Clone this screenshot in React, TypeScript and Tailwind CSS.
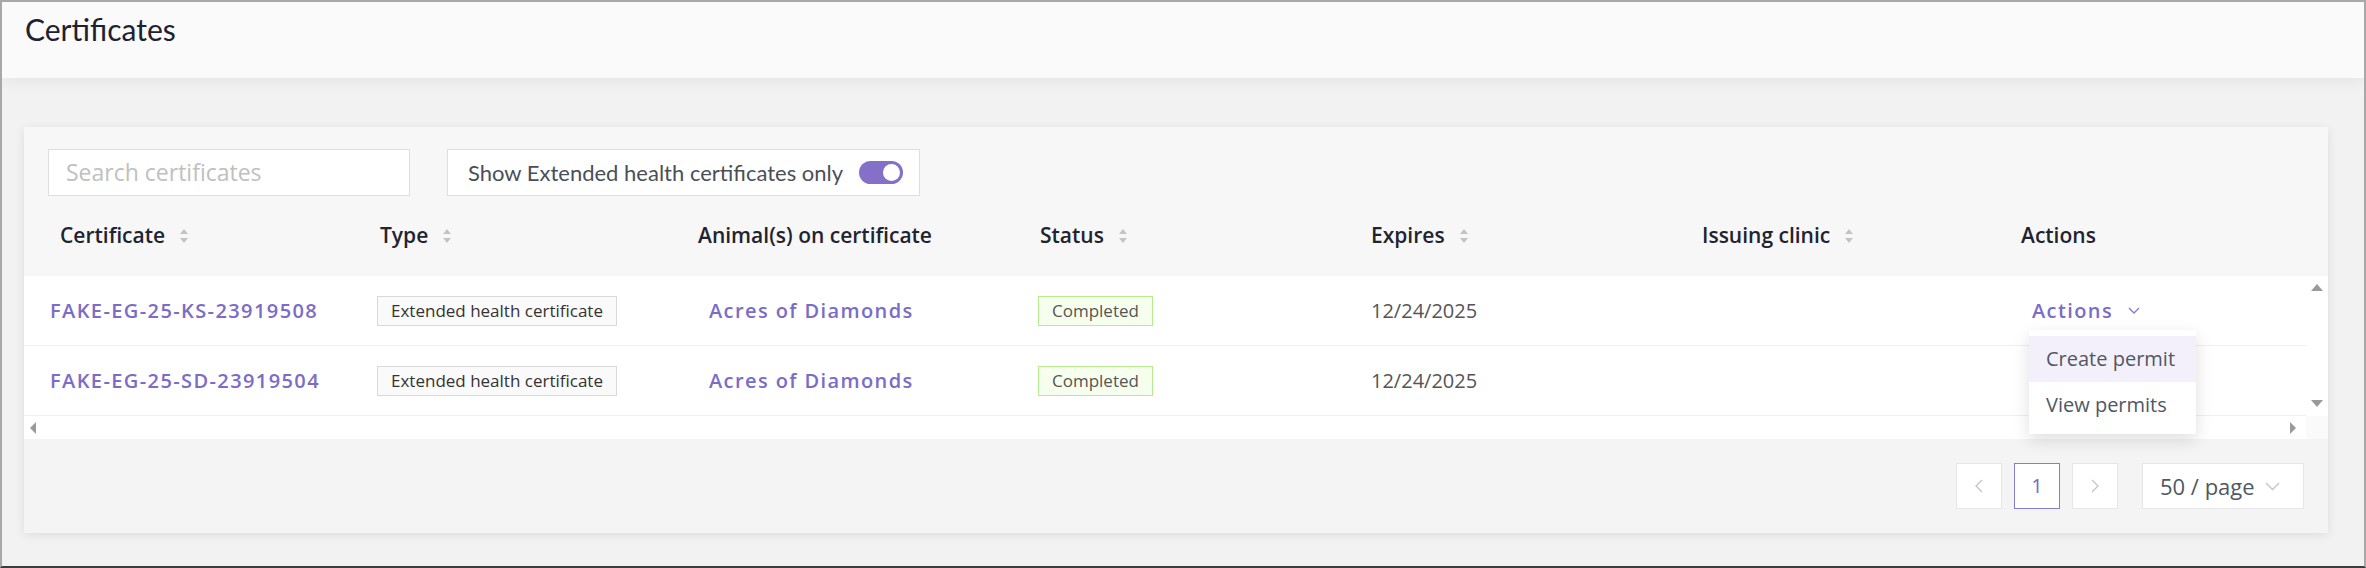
import React from "react";

const SortIcon = () => (
  <svg width="10" height="16" viewBox="0 0 10 16" className="shrink-0">
    <path d="M5 1 L9 6 L1 6 Z" fill="#c4c4c4" />
    <path d="M1 10 L9 10 L5 15 Z" fill="#c4c4c4" />
  </svg>
);

const cols = "grid grid-cols-[320px_318px_342px_331px_331px_319px_1fr]";

const linkCls = "text-[20px] font-semibold tracking-[1.4px] text-[#7b6cc7]";

function Row({ id, withActions }: { id: string; withActions: boolean }) {
  return (
    <div className={`${cols} h-[70px] items-center pl-[36px] border-b border-[#efefef] bg-white`}>
      <div className="-ml-[10px]">
        <span className={linkCls}>{id}</span>
      </div>
      <div className="-ml-[3px]">
        <span className="inline-flex h-[30px] items-center border border-[#d9d9d9] bg-[#fafafa] px-[13px] text-[17px] text-[#333]">
          Extended health certificate
        </span>
      </div>
      <div className="ml-[11px]">
        <span className={linkCls}>Acres of Diamonds</span>
      </div>
      <div className="-ml-[2px]">
        <span className="inline-flex h-[30px] items-center border border-[#b7eb8f] bg-[#f6ffed] px-[13px] text-[17px] text-[#555]">
          Completed
        </span>
      </div>
      <div className="text-[20px] text-[#555]">12/24/2025</div>
      <div />
      <div className="ml-[11px]">
        {withActions && (
          <span className="inline-flex items-center gap-[15px]">
            <span className={linkCls}>Actions</span>
            <svg width="12" height="7" viewBox="0 0 12 7">
              <path d="M1 1 L6 6 L11 1" fill="none" stroke="#8b7bd0" strokeWidth="1.4" />
            </svg>
          </span>
        )}
      </div>
    </div>
  );
}

export default function App() {
  return (
    <div className="w-[2366px] h-[568px] overflow-hidden border-2 border-[#a8a8a8] border-b-[#3d3d3d] bg-[#f2f2f2] font-['Open_Sans',sans-serif] flex flex-col">
      <header className="relative z-10 h-[76px] shrink-0 bg-[#fafafa] pl-[23px] pt-[9px] shadow-[0_4px_14px_rgba(0,0,0,0.06)]">
        <h1 className="font-['Lato',sans-serif] text-[30px] leading-[36px] text-[#1c2230]">Certificates</h1>
      </header>
      <main className="px-[22px] pt-[49px]">
        <div className="w-[2304px] bg-[#f7f7f7] shadow-[0_2px_10px_rgba(0,0,0,0.09)]">
          {/* toolbar */}
          <div className="flex gap-[37px] px-[24px] pt-[22px]">
            <div className="flex h-[47px] w-[362px] items-center border border-[#dedede] bg-white pl-[17px]">
              <span className="font-['Open_Sans',sans-serif] text-[23px] text-[#c0c0c0]">Search certificates</span>
            </div>
            <div className="flex h-[47px] w-[473px] items-center border border-[#dedede] bg-white pl-[20px]">
              <span className="font-['Lato',sans-serif] text-[22px] text-[#4a4f57]">Show Extended health certificates only</span>
              <span className="ml-[16px] flex h-[23px] w-[44px] items-center justify-end rounded-full bg-[#8470c8] pr-[3px]">
                <span className="h-[17px] w-[17px] rounded-full bg-white" />
              </span>
            </div>
          </div>
          {/* table header */}
          <div className={`${cols} h-[80px] items-center pl-[36px] text-[21px] font-semibold text-[#1f2430]`}>
            <div className="flex items-center gap-[14px]">Certificate<SortIcon /></div>
            <div className="flex items-center gap-[14px]">Type<SortIcon /></div>
            <div className="flex items-center gap-[14px]">Animal(s) on certificate</div>
            <div className="flex items-center gap-[14px]">Status<SortIcon /></div>
            <div className="flex items-center gap-[14px]">Expires<SortIcon /></div>
            <div className="flex items-center gap-[14px]">Issuing clinic<SortIcon /></div>
            <div className="flex items-center">Actions</div>
          </div>
          {/* body */}
          <div className="relative flex">
            <div className="w-[2282px]">
              <Row id="FAKE-EG-25-KS-23919508" withActions />
              <Row id="FAKE-EG-25-SD-23919504" withActions={false} />
              <div className="flex h-[23px] items-center justify-between bg-white pl-[5px] pr-[9px]">
                <svg width="8" height="12" viewBox="0 0 8 12">
                  <path d="M7 0 L1 6 L7 12 Z" fill="#9a9a9a" />
                </svg>
                <svg width="8" height="12" viewBox="0 0 8 12">
                  <path d="M1 0 L7 6 L1 12 Z" fill="#9a9a9a" />
                </svg>
              </div>
            </div>
            <div className="flex w-[22px] flex-col bg-white">
              <div className="flex h-[140px] flex-col items-center justify-between pb-[8px] pt-[7px]">
                <svg width="12" height="8" viewBox="0 0 12 8">
                  <path d="M0 8 L6 1 L12 8 Z" fill="#9a9a9a" />
                </svg>
                <svg width="12" height="8" viewBox="0 0 12 8">
                  <path d="M0 0 L6 7 L12 0 Z" fill="#9a9a9a" />
                </svg>
              </div>
              <div className="h-[23px] bg-[#fafafa]" />
            </div>
            {/* dropdown */}
            <div className="absolute left-[2005px] top-[54px] w-[167px] bg-white py-[6px] shadow-[0_6px_16px_rgba(0,0,0,0.13)]">
              <div className="flex h-[46px] items-center bg-[#f3f0fc] pl-[17px] text-[20px] text-[#505862]">Create permit</div>
              <div className="flex h-[46px] items-center pl-[17px] text-[20px] text-[#505862]">View permits</div>
            </div>
          </div>
          {/* pagination */}
          <div className="flex justify-end gap-[12px] bg-[#f4f4f4] pb-[24px] pr-[24px] pt-[24px]">
            <div className="flex h-[46px] w-[46px] items-center justify-center border border-[#e6e6e6] bg-white">
              <svg width="8" height="14" viewBox="0 0 8 14">
                <path d="M7 1 L1 7 L7 13" fill="none" stroke="#c4c4c4" strokeWidth="1.3" />
              </svg>
            </div>
            <div className="flex h-[46px] w-[46px] items-center justify-center border border-[#8b7bd0] bg-white text-[20px] text-[#7868c4]">1</div>
            <div className="flex h-[46px] w-[46px] items-center justify-center border border-[#e6e6e6] bg-white">
              <svg width="8" height="14" viewBox="0 0 8 14">
                <path d="M1 1 L7 7 L1 13" fill="none" stroke="#c4c4c4" strokeWidth="1.3" />
              </svg>
            </div>
            <div className="ml-[12px] flex h-[46px] w-[162px] items-center border border-[#e6e6e6] bg-white pl-[17px]">
              <span className="text-[22px] text-[#505862]">50 / page</span>
              <svg className="ml-[10px]" width="15" height="9" viewBox="0 0 15 9">
                <path d="M1 1 L7.5 7.5 L14 1" fill="none" stroke="#c4c4c4" strokeWidth="1.3" />
              </svg>
            </div>
          </div>
        </div>
      </main>
    </div>
  );
}
